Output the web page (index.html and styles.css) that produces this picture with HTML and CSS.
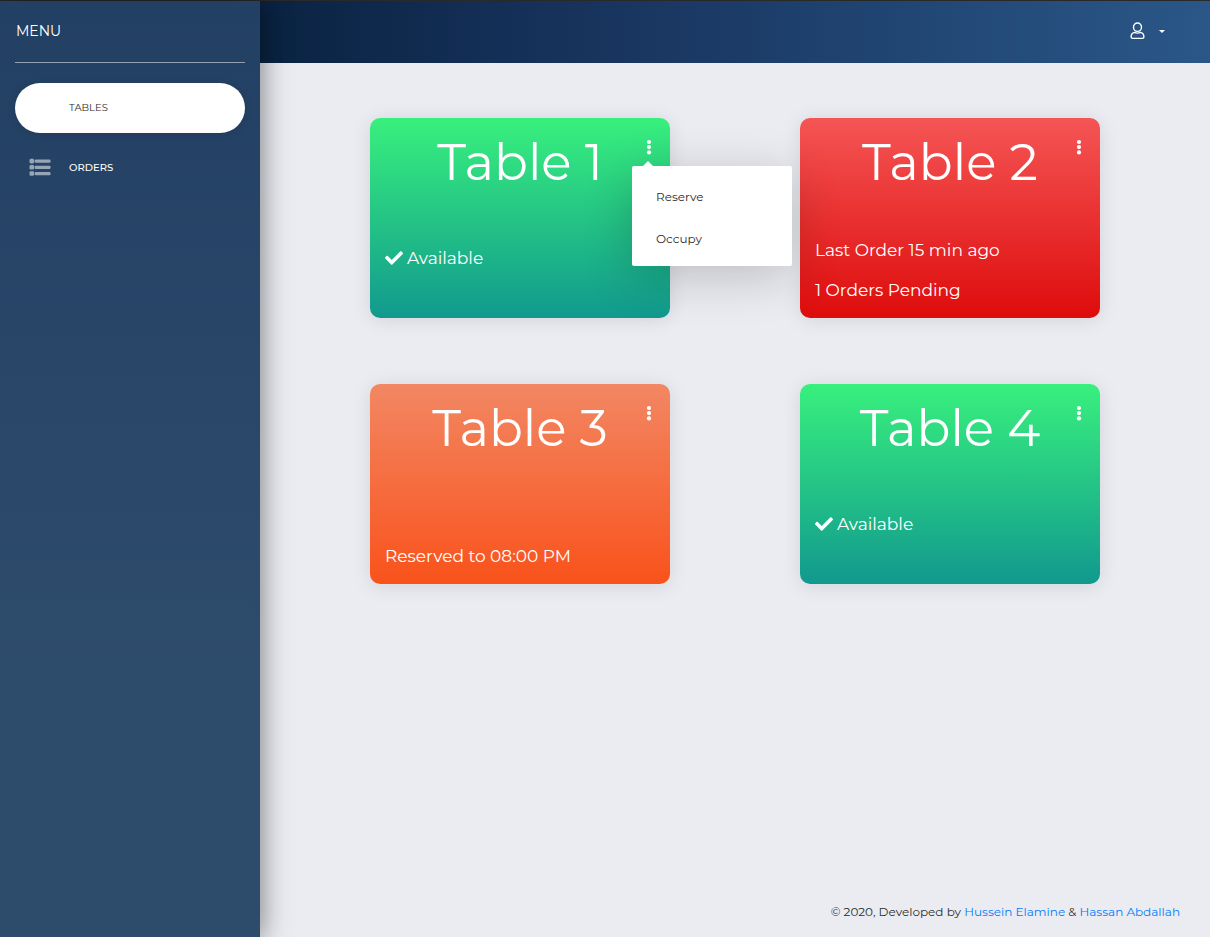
FILE: index.html
```html
<!DOCTYPE html>
<html lang="en">
<head>
<meta charset="utf-8">
<meta name="viewport" content="width=device-width, initial-scale=1">
<title>Tables</title>
<link rel="stylesheet" href="styles.css">
</head>
<body>
<svg class="sprite" aria-hidden="true">
  <symbol id="check" viewBox="0 0 512 512"><path d="M173.898 439.404l-166.4-166.4c-9.997-9.997-9.997-26.206 0-36.204l36.203-36.204c9.997-9.998 26.207-9.998 36.204 0L192 312.69 432.095 72.596c9.997-9.997 26.207-9.997 36.204 0l36.203 36.204c9.997 9.997 9.997 26.206 0 36.204l-294.4 294.401c-9.998 9.997-26.207 9.997-36.204-.001z"/></symbol>
  <symbol id="dots" viewBox="0 0 6 16"><circle cx="3" cy="3" r="2.1"/><circle cx="3" cy="8.1" r="2.1"/><circle cx="3" cy="13.4" r="2.1"/></symbol>
</svg>
<div class="layout">
  <aside class="sidebar">
    <h2 class="brand">MENU</h2>
    <nav class="nav">
      <a class="nav-link active" href="#tables"><span class="nav-icon"></span>TABLES</a>
      <a class="nav-link" href="#orders">
        <svg class="nav-icon" viewBox="0 0 22 18" aria-hidden="true"><g><rect x="0.5" y="0.8" width="4.6" height="4.6" rx="1.4"/><rect x="0.5" y="7" width="4.6" height="4.6" rx="1.4"/><rect x="0.5" y="13.2" width="4.6" height="4.6" rx="1.4"/><rect x="5.6" y="1.5" width="16" height="3.3" rx="1.3"/><rect x="5.6" y="7.7" width="16" height="3.3" rx="1.3"/><rect x="5.6" y="13.9" width="16" height="3.3" rx="1.3"/></g></svg>ORDERS</a>
    </nav>
  </aside>
  <div class="page">
    <header class="topbar">
      <button class="user" type="button" aria-label="Account">
        <svg class="user-icon" viewBox="0 0 16 18" aria-hidden="true"><ellipse cx="8.5" cy="5.2" rx="4" ry="4.2"/><path d="M5.4 10.4C3.2 11 2.1 12.5 2.1 15c0 .9.8 1.4 1.6 1.4h9.6c.9 0 1.6-.5 1.6-1.4 0-2.5-1.1-4-3.3-4.6-1.9.9-4.3.9-6.2 0z"/></svg>
        <span class="caret"></span>
      </button>
    </header>
    <main class="tables">
      <article class="card available">
        <h1 class="title">Table 1</h1>
        <div class="more">
          <button class="more-button" type="button" aria-label="Table 1 options" aria-expanded="true"><svg class="dots"><use href="#dots"/></svg></button>
          <div class="menu">
            <button class="menu-item" type="button">Reserve</button>
            <button class="menu-item" type="button">Occupy</button>
          </div>
        </div>
        <p class="status raised"><svg class="check"><use href="#check"/></svg>Available</p>
      </article>
      <article class="card occupied">
        <h1 class="title">Table 2</h1>
        <div class="more"><button class="more-button" type="button" aria-label="Table 2 options"><svg class="dots"><use href="#dots"/></svg></button></div>
        <p class="status">Last Order 15 min ago</p>
        <p class="status">1 Orders Pending</p>
      </article>
      <article class="card reserved">
        <h1 class="title">Table 3</h1>
        <div class="more"><button class="more-button" type="button" aria-label="Table 3 options"><svg class="dots"><use href="#dots"/></svg></button></div>
        <p class="status">Reserved to 08:00 PM</p>
      </article>
      <article class="card available">
        <h1 class="title">Table 4</h1>
        <div class="more"><button class="more-button" type="button" aria-label="Table 4 options"><svg class="dots"><use href="#dots"/></svg></button></div>
        <p class="status raised"><svg class="check"><use href="#check"/></svg>Available</p>
      </article>
    </main>
    <footer class="footer">© 2020, Developed by <a href="#hussein">Hussein Elamine</a> &amp; <a href="#hassan">Hassan Abdallah</a></footer>
  </div>
</div>
</body>
</html>
```

FILE: styles.css
```css
* { box-sizing: border-box; }
body {
  margin: 0;
  font-family: Montserrat, Inter, sans-serif;
  color: #2c2c2c;
  background: #ebecf1;
}
button { font: inherit; border: 0; padding: 0; background: none; cursor: pointer; }
h1, h2, p { margin: 0; }
.sprite { display: none; }

.layout {
  display: flex;
  min-height: 100vh;
  border-top: 1px solid #292929;
}
.sidebar {
  position: relative;
  z-index: 2;
  flex: 0 0 260px;
  padding: 0 15px;
  background: linear-gradient(#224063, #2a476a 44%, #2d4b6a 70%);
  box-shadow: 0 2px 22px rgba(0, 0, 0, .2), 0 2px 30px rgba(0, 0, 0, .35);
}
.brand {
  padding: 0 1px;
  border-bottom: 1px solid rgba(255, 255, 255, .5);
  font-size: 14px;
  line-height: 61px;
  font-weight: 400;
  color: #fff;
}
.nav { display: flex; flex-direction: column; gap: 10px; padding-top: 20px; }
.nav-link {
  display: flex;
  align-items: center;
  gap: 18px;
  height: 50px;
  padding: 0 14px 2px;
  border-radius: 25px;
  font-size: 10px;
  font-weight: 500;
  color: #fff;
  text-decoration: none;
}
.nav-link.active {
  background: #fff;
  color: #2c2c2c;
  font-weight: 400;
  box-shadow: 0 2px 8px rgba(0, 0, 0, .1);
}
.nav-icon { width: 22px; height: 18px; fill: #97a5b6; }

.page { flex: 1; display: flex; flex-direction: column; min-width: 0; }
.topbar {
  display: flex;
  justify-content: flex-end;
  align-items: center;
  height: 62px;
  padding: 0 45px 2px;
  background: linear-gradient(90deg, #0a2342, #16315a 30%, #2a5788);
}
.user { display: flex; align-items: center; gap: 14px; }
.user-icon { width: 16px; height: 18px; fill: none; stroke: #fff; stroke-width: 1.4; }
.caret { border: 3px solid transparent; border-top-color: #fff; border-bottom: 0; }

.tables {
  display: grid;
  grid-template-columns: repeat(auto-fit, minmax(320px, 1fr));
  justify-items: center;
  gap: 66px 0;
  padding: 55px 45px;
}
.card {
  position: relative;
  display: flex;
  flex-direction: column;
  gap: 16px;
  width: 300px;
  min-height: 200px;
  padding: 13px 15px 16px;
  border-radius: 10px;
  color: #fff;
  box-shadow: 0 2px 20px rgba(0, 0, 0, .1);
}
.available { background: linear-gradient(#38f07d, #11998e); }
.occupied { background: linear-gradient(#f55555, #de0c0c); }
.reserved { background: linear-gradient(#f28763, #f9521b); }
.title {
  margin-bottom: auto;
  font-size: 50px;
  line-height: 64px;
  font-weight: 400;
  text-align: center;
}
.status { font-size: 17px; line-height: 24px; }
.raised { margin-bottom: 32px; }
.check { width: 18px; height: 18px; margin-right: 4px; fill: #fff; vertical-align: -3px; }

/* Options menu, opened over the card and its neighbours */
.more { position: absolute; top: 21px; right: 18px; z-index: 1; }
.more-button { display: block; width: 6px; height: 16px; }
.dots { display: block; width: 6px; height: 16px; fill: #fff; }
.menu {
  position: absolute;
  top: 27px;
  left: -14px;
  width: 160px;
  padding: 10px 0 6px;
  border-radius: 2px;
  background: #fff;
  box-shadow: 0 10px 50px rgba(0, 0, 0, .2);
}
.menu::before {
  content: "";
  position: absolute;
  bottom: 100%;
  left: 11px;
  border: 5px solid transparent;
  border-top: 0;
  border-bottom-color: #fff;
}
.menu-item {
  display: block;
  width: 100%;
  padding: 0 24px;
  font-size: 12px;
  line-height: 42px;
  font-weight: 400;
  text-align: left;
  color: #2c2c2c;
}
.card:first-child { z-index: 1; }

.footer {
  margin-top: auto;
  padding: 15px 30px;
  font-size: 12px;
  line-height: 20px;
  font-weight: 400;
  text-align: right;
}
.footer a { color: #007bff; text-decoration: none; }
```
